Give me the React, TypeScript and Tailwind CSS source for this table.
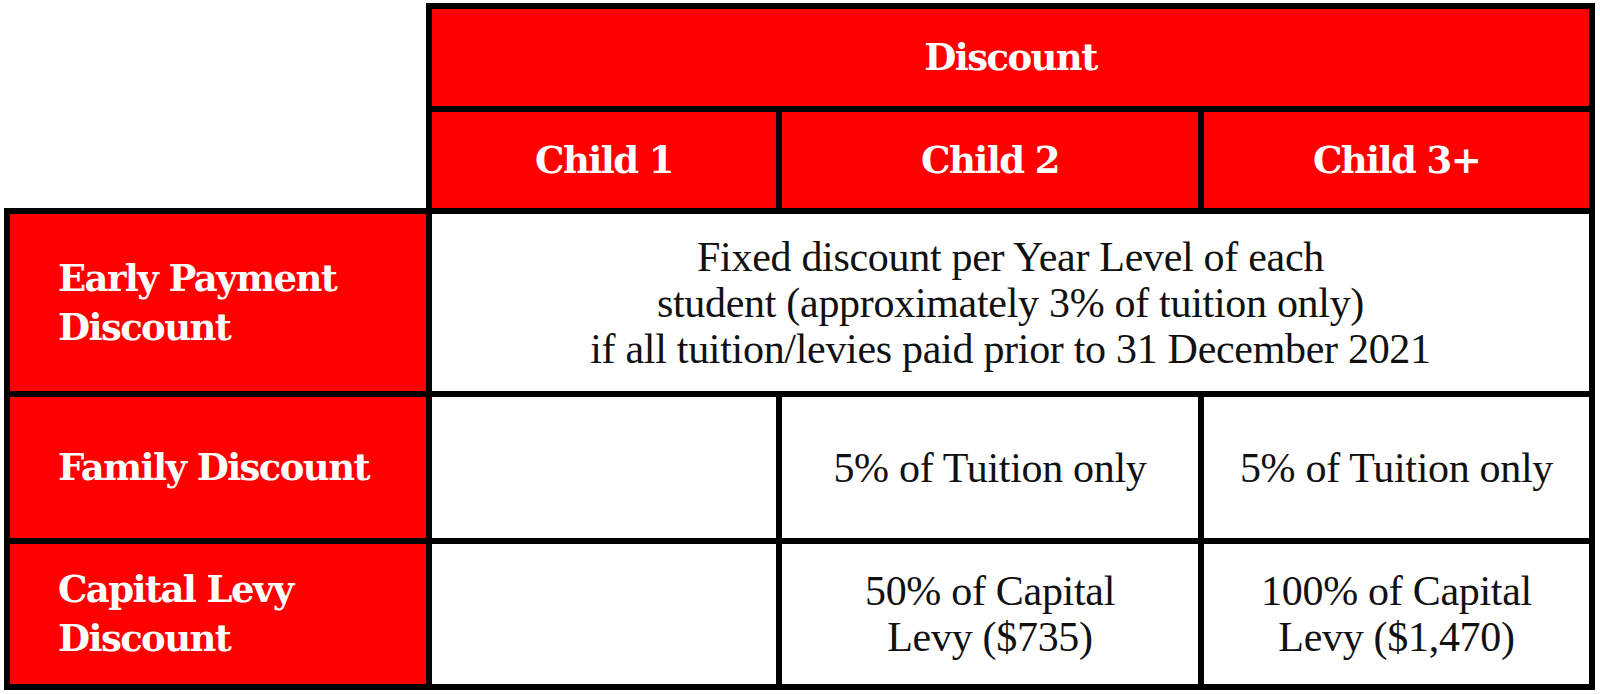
import React from "react";

const head = "font-['DejaVu_Serif',serif] font-bold text-white text-[37px] leading-[49px] tracking-[-1.6px]";
const body = "font-['Liberation_Serif',serif] text-[#111] text-[42px] leading-[46px] tracking-[-0.3px]";

export default function App() {
  return (
    <div className="w-[1600px] h-[694px] bg-white">
      <div className="ml-[4px] pt-[3px] grid grid-cols-[422px_350px_422px_397px] grid-rows-[103px_102px_183px_147px_152px]">
        <div className="row-span-2" />
        <div className={`col-span-3 bg-[#ff0000] border-l-[6px] border-t-[6px] border-r-[6px] border-black flex items-center justify-center ${head}`}>
          Discount
        </div>
        <div className={`bg-[#ff0000] border-l-[6px] border-t-[6px] border-black flex items-center justify-center ${head}`}>
          Child 1
        </div>
        <div className={`bg-[#ff0000] border-l-[6px] border-t-[6px] border-black flex items-center justify-center ${head}`}>
          Child 2
        </div>
        <div className={`bg-[#ff0000] border-l-[6px] border-t-[6px] border-r-[6px] border-black flex items-center justify-center ${head}`}>
          Child 3+
        </div>

        <div className={`bg-[#ff0000] border-l-[6px] border-t-[6px] border-black flex items-center pl-[48px] ${head}`}>
          <div>
            Early Payment
            <br />
            Discount
          </div>
        </div>
        <div className={`col-span-3 bg-white border-l-[6px] border-t-[6px] border-r-[6px] border-black flex items-center justify-center text-center ${body}`}>
          <div>
            Fixed discount per Year Level of each
            <br />
            student (approximately 3% of tuition only)
            <br />
            if all tuition/levies paid prior to 31 December 2021
          </div>
        </div>

        <div className={`bg-[#ff0000] border-l-[6px] border-t-[6px] border-black flex items-center pl-[48px] ${head}`}>
          Family Discount
        </div>
        <div className="bg-white border-l-[6px] border-t-[6px] border-black" />
        <div className={`bg-white border-l-[6px] border-t-[6px] border-black flex items-center justify-center text-center ${body}`}>
          5% of Tuition only
        </div>
        <div className={`bg-white border-l-[6px] border-t-[6px] border-r-[6px] border-black flex items-center justify-center text-center ${body}`}>
          5% of Tuition only
        </div>

        <div className={`bg-[#ff0000] border-l-[6px] border-t-[6px] border-b-[6px] border-black flex items-center pl-[48px] ${head}`}>
          <div>
            Capital Levy
            <br />
            Discount
          </div>
        </div>
        <div className="bg-white border-l-[6px] border-t-[6px] border-b-[6px] border-black" />
        <div className={`bg-white border-l-[6px] border-t-[6px] border-b-[6px] border-black flex items-center justify-center text-center ${body}`}>
          <div>
            50% of Capital
            <br />
            Levy ($735)
          </div>
        </div>
        <div className={`bg-white border-l-[6px] border-t-[6px] border-r-[6px] border-b-[6px] border-black flex items-center justify-center text-center ${body}`}>
          <div>
            100% of Capital
            <br />
            Levy ($1,470)
          </div>
        </div>
      </div>
    </div>
  );
}
